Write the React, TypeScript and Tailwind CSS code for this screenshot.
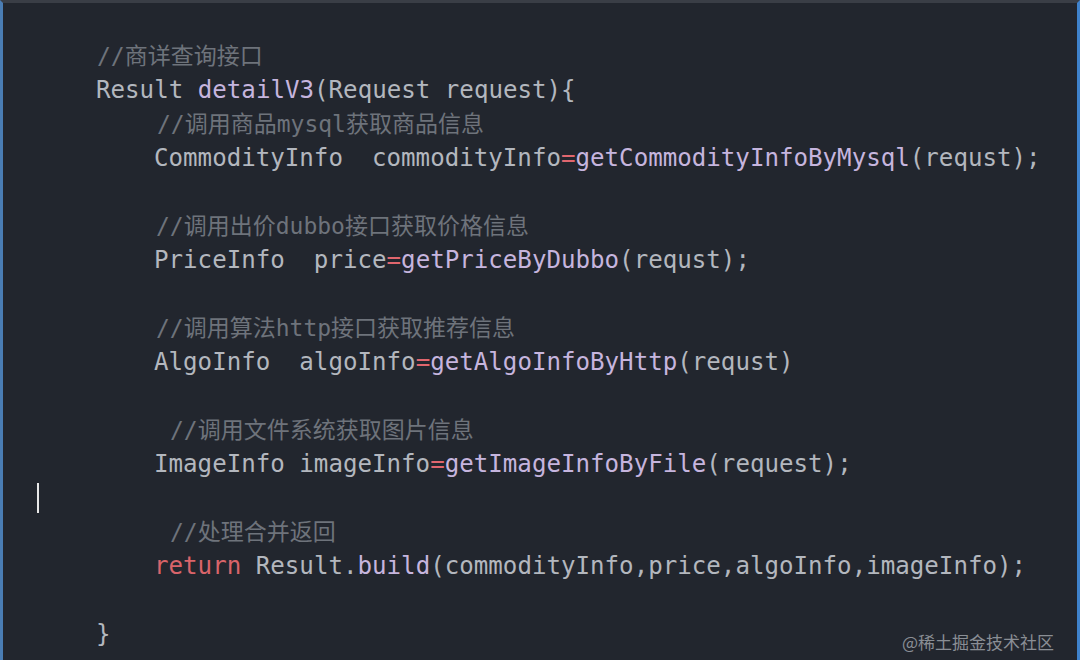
import React from "react";

const MONO = "font-['DejaVu_Sans_Mono','Noto_Sans_CJK_SC',monospace]";

function Fn({ children }: { children: React.ReactNode }) {
  return <span className="text-[#c6b5de]">{children}</span>;
}
function Eq() {
  return <span className="text-[#e0666e]">=</span>;
}

function Line({ ml, children }: { ml: string; children?: React.ReactNode }) {
  return (
    <div className={`h-[34px] leading-[34px] whitespace-pre flex items-center ${ml}`}>
      {children}
    </div>
  );
}

function Comment({ ml, text }: { ml: string; text: string }) {
  return (
    <div className={`h-[34px] leading-[34px] whitespace-pre text-[23px] text-[#6e737b] ${ml}`}>
      {text}
    </div>
  );
}

export default function App() {
  return (
    <div className="w-[1080px] h-[660px] bg-[#22262e] border-t-[3px] border-t-[#3a3e46] border-l-[3px] border-l-[#4a7db4] border-r-[3px] border-r-[#3f82cc] relative overflow-hidden">
      <div className={`pt-[36px] pl-[34px] ${MONO} text-[24.15px] text-[#b3b7be]`}>
        <Comment ml="ml-[60px]" text="//商详查询接口" />
        <Line ml="ml-[59px]">
          {"Result "}<Fn>detailV3</Fn>{"(Request request){"}
        </Line>
        <Comment ml="ml-[120px]" text="//调用商品mysql获取商品信息" />
        <Line ml="ml-[117px]">
          {"CommodityInfo  commodityInfo"}<Eq /><Fn>getCommodityInfoByMysql</Fn>{"(requst);"}
        </Line>
        <Line ml="ml-[117px]" />
        <Comment ml="ml-[119px]" text="//调用出价dubbo接口获取价格信息" />
        <Line ml="ml-[117px]">
          {"PriceInfo  price"}<Eq /><Fn>getPriceByDubbo</Fn>{"(requst);"}
        </Line>
        <Line ml="ml-[117px]" />
        <Comment ml="ml-[119px]" text="//调用算法http接口获取推荐信息" />
        <Line ml="ml-[117px]">
          {"AlgoInfo  algoInfo"}<Eq /><Fn>getAlgoInfoByHttp</Fn>{"(requst)"}
        </Line>
        <Line ml="ml-[117px]" />
        <Comment ml="ml-[133px]" text="//调用文件系统获取图片信息" />
        <Line ml="ml-[117px]">
          {"ImageInfo imageInfo"}<Eq /><Fn>getImageInfoByFile</Fn>{"(request);"}
        </Line>
        <Line ml="ml-0">
          <span className="block w-[2px] h-[30px] bg-[#e8e8e8]" />
        </Line>
        <Comment ml="ml-[133px]" text="//处理合并返回" />
        <Line ml="ml-[117px]">
          <span className="text-[#d9646a]">return</span>{" Result."}<Fn>build</Fn>{"(commodityInfo,price,algoInfo,imageInfo);"}
        </Line>
        <Line ml="ml-[117px]" />
        <Line ml="ml-[59px]">{"}"}</Line>
      </div>
      <div className="absolute right-[23px] bottom-[6px] text-[17px] text-[#8a8e95] font-['Noto_Sans_CJK_SC',sans-serif]">
        @稀土掘金技术社区
      </div>
    </div>
  );
}
